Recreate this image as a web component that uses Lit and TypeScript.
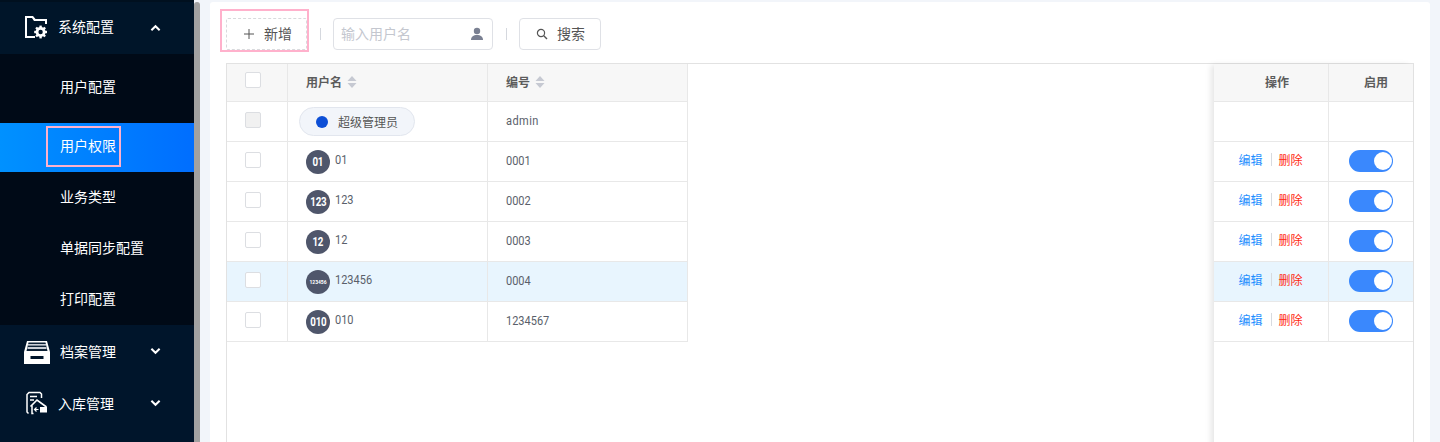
import { LitElement, html, css, svg } from "lit";
import { customElement } from "lit/decorators.js";

const chevron = (up: boolean) => html`<svg class="chev" viewBox="0 0 12 8" width="11" height="8">
  <path d=${up ? "M1.5 6.5 6 2l4.5 4.5" : "M1.5 1.5 6 6l4.5-4.5"} fill="none" stroke="#fff" stroke-width="2.2"/></svg>`;

const folderIcon = html`<svg class="ico" width="24" height="24" viewBox="0 0 24 24">
  <path d="M1 1h8l2.5 3H23v5h-2V6H10L8 3H3v18h8v2H1z" fill="#fff"/>
  <g transform="translate(16.6 17)">
    <circle r="3.6" fill="none" stroke="#fff" stroke-width="2.8"/>
    ${[0, 45, 90, 135, 180, 225, 270, 315].map(
      (a) => svg`<rect x="-1.2" y="-6.4" width="2.4" height="2.4" fill="#fff" transform="rotate(${a})"/>`
    )}
  </g></svg>`;

const boxIcon = html`<svg class="ico" width="28" height="26" viewBox="0 0 28 26">
  <path d="M4 2h20l3 11v12H1V13z" fill="#fff"/>
  <path d="M5.5 3.5h17L24.5 12h-21z" fill="#0c2136"/>
  <rect x="5" y="5" width="18" height="1.6" fill="#c9ced6"/>
  <rect x="4.5" y="8" width="19" height="2" fill="#c9ced6"/>
  <rect x="7.5" y="17" width="13" height="3" fill="#00152b"/></svg>`;

const houseIcon = html`<svg class="ico" width="24" height="24" viewBox="0 0 24 24">
  <path d="M3.5 22.5 2 21V3.5L4 1.5h11L16.5 3v4" fill="none" stroke="#fff" stroke-width="1.5"/>
  <path d="M5 5.5h7M5 9h4" stroke="#fff" stroke-width="1.3"/>
  <path d="M5.5 15.5 12 9l9.5 7" fill="none" stroke="#fff" stroke-width="1.6"/>
  <path d="M7 14.5v8h1.5" fill="none" stroke="#fff" stroke-width="1.5"/>
  <path d="M9.5 18.5h4M11.5 16.5l-2 2 2 2" fill="none" stroke="#fff" stroke-width="1.2"/>
  <rect x="15" y="16" width="7" height="5.5" fill="#fff"/></svg>`;

const sorter = html`<svg class="sort" width="10" height="12" viewBox="0 0 10 12">
  <path d="M5 0l4.5 5h-9z" fill="#c6c9d2"/><path d="M5 12l4.5-5h-9z" fill="#c6c9d2"/></svg>`;

const rows = [
  { av: "01", name: "01", code: "0001" },
  { av: "123", name: "123", code: "0002" },
  { av: "12", name: "12", code: "0003" },
  { av: "123456", name: "123456", code: "0004", hi: true },
  { av: "010", name: "010", code: "1234567" },
];

@customElement("app-root")
export class AppRoot extends LitElement {
  static styles = css`
    :host { display: block; width: 1440px; height: 442px; overflow: hidden; background: #f2f5fa;
      font-family: "Noto Sans CJK SC", "Noto Sans", sans-serif; color: #4a4a4a; }
    .page { display: flex; height: 442px; }
    .side { width: 194px; flex: none; background: #00152b; color: #fff; font-size: 14px; overflow: hidden; }
    .group { display: flex; align-items: center; height: 52px; position: relative; }
    .group.top { background: #001529; border-top: 2px solid #00101f; }
    .gicon { flex: none; display: flex; box-sizing: border-box; }
    .gicon .ico { display: block; }
    .g1 { width: 58px; padding: 0 0 2px 24px; }
    .g2 { width: 60px; padding: 2px 0 0 23px; }
    .g3 { width: 58px; padding-left: 25px; }
    .glabel { flex: 1; }
    .top .glabel { padding-bottom: 4px; }
    .chev { margin-right: 33px; display: block; }
    .sub { background: #000a17; padding-top: 8px; height: 263px; }
    .item { height: 51px; box-sizing: border-box; padding: 0 0 4px 60px; display: flex; align-items: center; position: relative; }
    .item.first { height: 50px; margin-bottom: 11px; padding-bottom: 2px; }
    .item.active { height: 49px; padding-bottom: 5px; background: linear-gradient(90deg, #0091ff, #006eff); }
    .mark { position: absolute; border: 2px solid #ffb1cc; box-sizing: border-box; pointer-events: none; }
    .mark.a { left: 46px; top: 3px; width: 75px; height: 41px; }
    .mark.b { left: -7px; top: -10px; width: 89px; height: 43px; }
    .bar { width: 6px; flex: none; background: #a1a1a1; border-radius: 3px 3px 0 0; margin-top: 2px; }
    .main { flex: 1; padding: 2px 10px 0; min-width: 0; }
    .card { background: #fff; height: 440px; border-radius: 3px 3px 0 0; padding: 16px 16px 0; box-sizing: border-box; }
    .tools { display: flex; align-items: center; height: 32px; }
    .add { position: relative; width: 81px; height: 32px; box-sizing: border-box; border: 1px dashed #d9dadd; border-radius: 2px;
      display: flex; align-items: center; padding-left: 17px; gap: 10px; font-size: 14px; color: #555; }
    .txt { padding-bottom: 3px; }
    .sep { width: 1px; height: 12px; background: #d5d8de; margin: 0 12.5px; }
    .input { width: 160px; height: 32px; box-sizing: border-box; border: 1px solid #dfe1e6; border-radius: 4px;
      display: flex; align-items: center; justify-content: space-between; padding: 0 8px 0 7px; font-size: 14px; color: #c4c7cf; }
    .search { width: 82px; height: 32px; box-sizing: border-box; border: 1px solid #dfe1e6; border-radius: 4px;
      display: flex; align-items: center; padding-left: 16px; gap: 9px; font-size: 14px; color: #555; }
    .table { margin-top: 13px; height: 400px; border: 1px solid #e2e2e2; border-bottom: 0; display: flex; justify-content: space-between; }
    .left { width: 461px; }
    .right { width: 199px; box-shadow: -4px 0 6px -1px rgba(0,0,0,.1); }
    .row { display: grid; height: 40px; box-sizing: border-box; border-bottom: 1px solid #e8e8e8; font-size: 12px; align-items: stretch; }
    .left .row { grid-template-columns: 61px 200px 200px; }
    .right .row { grid-template-columns: 115px 84px; }
    .row.head { height: 38px; background: #f7f7f7; font-weight: 700; color: #5c5c5c; }
    .row.hi { background: #e8f5fe; }
    .cell { display: flex; align-items: center; border-right: 1px solid #e8e8e8; min-width: 0; box-sizing: border-box; }
    .head .cell { padding-bottom: 2px; }
    .cell.pad { padding-left: 18px; gap: 5px; }
    .cell.mid { justify-content: center; }
    .cell.end { border-right: 0; }
    .head .c1 { padding-left: 12px; }
    .head .c2 { padding-left: 10px; }
    .cb { width: 16px; height: 16px; box-sizing: border-box; border: 1px solid #dcdee2; border-radius: 2px; background: #fff; margin: -4px 8px 0 0; }
    .cb.off { background: #f1f1f1; }
    .chip { margin-left: 11px; width: 116px; height: 29px; box-sizing: border-box; border: 1px solid #e2e6ee; border-radius: 15px;
      background: #f2f5fa; display: flex; align-items: center; padding-left: 16px; gap: 10px; color: #555; }
    .dot { width: 12px; height: 12px; border-radius: 50%; background: #0d4fd6; }
    .av { width: 24px; height: 24px; border-radius: 50%; background: #4f566b; color: #fff; font-weight: 700; flex: none;
      display: flex; align-items: center; justify-content: center; font-family: "Roboto", sans-serif; font-size: 12.5px; letter-spacing: -.3px; }
    .av span { display: block; transform: scaleX(.78); }
    .av.tiny { font-size: 5px; letter-spacing: 0; }
    .av.tiny span { transform: none; }
    .num { display: block; font-family: "Roboto", sans-serif; font-size: 12.5px; color: #5a5f6b; transform: scaleX(.88); transform-origin: left center; white-space: nowrap; }
    .num.word { letter-spacing: .5px; }
    .nm { margin-top: -5px; }
    .cell.code { padding-bottom: 2px; }
    .edit { color: #1e8fff; }
    .del { color: #ff2a12; }
    .vline { width: 1px; height: 13px; background: #d8dbe0; margin: 0 7px 0 8px; }
    .ops { margin: -4px 0 0 -1px; display: flex; align-items: center; }
    .sw { width: 44px; height: 22px; border-radius: 11px; background: #3a88fd; display: flex; justify-content: flex-end; align-items: center; padding-right: 1.5px; box-sizing: border-box; margin-top: -2px; }
    .knob { width: 18px; height: 18px; background: #fff; border-radius: 50%; }
  `;

  render() {
    return html`<div class="page">
      <aside class="side">
        <div class="group top"><span class="gicon g1">${folderIcon}</span><span class="glabel">系统配置</span>${chevron(true)}</div>
        <div class="sub">
          <div class="item first">用户配置</div>
          <div class="item active">用户权限<span class="mark a"></span></div>
          <div class="item">业务类型</div>
          <div class="item">单据同步配置</div>
          <div class="item">打印配置</div>
        </div>
        <div class="group"><span class="gicon g2">${boxIcon}</span><span class="glabel">档案管理</span>${chevron(false)}</div>
        <div class="group"><span class="gicon g3">${houseIcon}</span><span class="glabel">入库管理</span>${chevron(false)}</div>
      </aside>
      <div class="bar"></div>
      <main class="main"><div class="card">
        <div class="tools">
          <div class="add">
            <svg width="10" height="10" viewBox="0 0 10 10"><path d="M5 0v10M0 5h10" stroke="#555" stroke-width="1"/></svg>
            <span class="txt">新增</span><span class="mark b"></span>
          </div>
          <span class="sep"></span>
          <div class="input"><span class="txt">输入用户名</span>
            <svg width="14" height="14" viewBox="0 0 14 14"><circle cx="7" cy="4" r="3.2" fill="#7a8092"/><path d="M1 13c0-3.5 2.5-5 6-5s6 1.5 6 5z" fill="#7a8092"/></svg>
          </div>
          <span class="sep"></span>
          <div class="search">
            <svg width="12" height="12" viewBox="0 0 12 12"><circle cx="5" cy="5" r="3.6" fill="none" stroke="#555" stroke-width="1.2"/><path d="M7.8 7.8 11 11" stroke="#555" stroke-width="1.4"/></svg>
            <span class="txt">搜索</span>
          </div>
        </div>
        <div class="table">
          <div class="left">
            <div class="row head">
              <div class="cell mid"><span class="cb"></span></div>
              <div class="cell pad">用户名 ${sorter}</div>
              <div class="cell pad">编号 ${sorter}</div>
            </div>
            <div class="row">
              <div class="cell mid"><span class="cb off"></span></div>
              <div class="cell"><div class="chip"><span class="dot"></span>超级管理员</div></div>
              <div class="cell pad code"><span class="num word">admin</span></div>
            </div>
            ${rows.map((r) => html`<div class="row ${r.hi ? "hi" : ""}">
              <div class="cell mid"><span class="cb"></span></div>
              <div class="cell pad"><span class="av ${r.av.length > 3 ? "tiny" : ""}"><span>${r.av}</span></span><span class="num nm">${r.name}</span></div>
              <div class="cell pad code"><span class="num">${r.code}</span></div>
            </div>`)}
          </div>
          <div class="right">
            <div class="row head"><div class="cell mid c1">操作</div><div class="cell mid end c2">启用</div></div>
            <div class="row"><div class="cell"></div><div class="cell end"></div></div>
            ${rows.map((r) => html`<div class="row ${r.hi ? "hi" : ""}">
              <div class="cell mid"><span class="ops"><span class="edit">编辑</span><span class="vline"></span><span class="del">删除</span></span></div>
              <div class="cell mid end"><span class="sw"><span class="knob"></span></span></div>
            </div>`)}
          </div>
        </div>
      </div></main>
    </div>`;
  }
}
